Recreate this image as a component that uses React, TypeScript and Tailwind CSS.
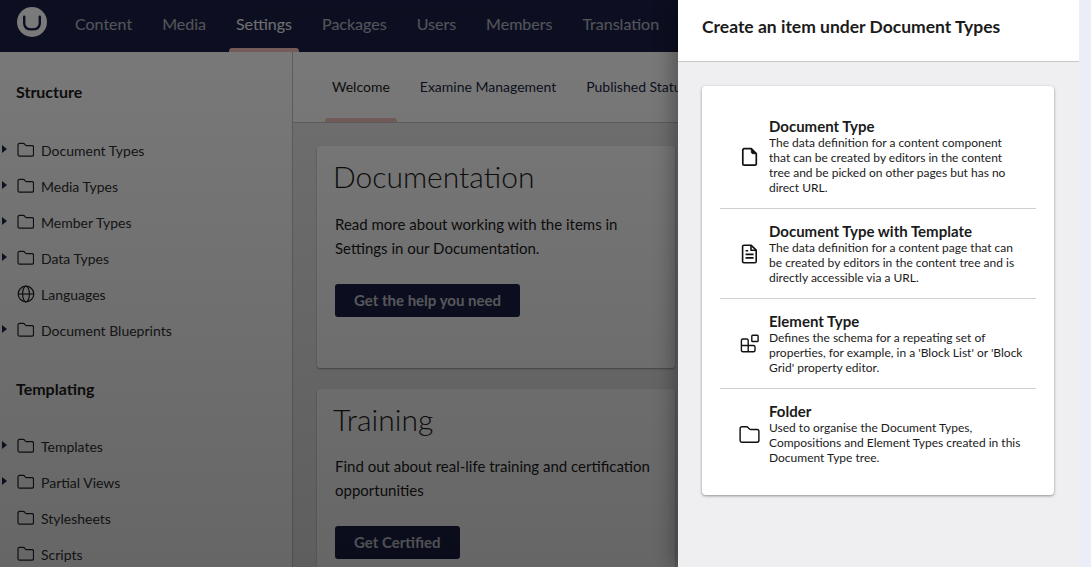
import React from 'react';

const navItems = ['Content', 'Media', 'Settings', 'Packages', 'Users', 'Members', 'Translation'];

const FolderIcon = ({ className = 'w-[17.5px] h-[15.5px]' }: { className?: string }) => (
  <svg viewBox="0 0 19 17" fill="none" stroke="currentColor" strokeWidth="1.3" strokeLinejoin="round" className={className}>
    <path d="M1 3.2C1 2.2 1.7 1.5 2.6 1.5h4.2c.6 0 1 .3 1.4.7l1 1.2c.3.3.6.5 1 .5h6.2c.9 0 1.6.7 1.6 1.6v8.3c0 .9-.7 1.7-1.6 1.7H2.6c-.9 0-1.6-.8-1.6-1.7V3.2z" />
  </svg>
);

const GlobeIcon = () => (
  <svg viewBox="0 0 18 18" fill="none" stroke="currentColor" strokeWidth="1.2" className="w-[18px] h-[18px]">
    <circle cx="9" cy="9" r="7.8" />
    <ellipse cx="9" cy="9" rx="3.4" ry="7.8" />
    <path d="M1.2 9h15.6" />
  </svg>
);

const TreeItem = ({ label, arrow = true, globe = false }: { label: string; arrow?: boolean; globe?: boolean }) => (
  <div className="relative flex h-9 items-center pl-[16.5px] text-[#1b264f]">
    {arrow && <span className="absolute left-[2px] top-[13px] h-0 w-0 border-y-[4.5px] border-l-[5px] border-y-transparent border-l-[#1b264f]" />}
    <span className="flex w-[24.5px] shrink-0 text-[#222]">{globe ? <GlobeIcon /> : <FolderIcon />}</span>
    <span className="text-[14px] text-[#303030]">{label}</span>
  </div>
);

const InfoCard = ({ title, lines, button, bodyGap }: { title: string; lines: string[]; button: string; bodyGap: string }) => (
  <div className="w-[358px] shrink-0 rounded-[3px] bg-white pb-[51px] pl-[18px] pt-[12px] shadow-[0_1px_2px_rgba(0,0,0,0.35)]">
    <h2 className="-ml-[2px] h-9 text-[30px] leading-9 font-light text-[#1b1b1b]">{title}</h2>
    <p className={`${bodyGap} text-[15px] leading-6 text-[#1b1b1b]`}>
      {lines[0]}
      <br />
      {lines[1]}
    </p>
    <button className="mt-[24px] flex h-[33px] items-center rounded-[3px] bg-[#1a1f45] px-[19px] text-[15px] font-bold text-white/75">{button}</button>
  </div>
);

const DocIcon = () => (
  <svg viewBox="0 0 20 20" fill="none" stroke="currentColor" strokeWidth="1.7" strokeLinejoin="round" className="h-5 w-5">
    <path d="M2.8 3c0-.8.6-1.3 1.3-1.3h7.2l5 5v10.2c0 .8-.6 1.3-1.3 1.3H4.1c-.7 0-1.3-.5-1.3-1.3V3z" />
    <path d="M11.3 1.7v3.2c0 1 .7 1.8 1.8 1.8h3.2" fill="currentColor" strokeWidth="0.9" />
  </svg>
);

const DocLinesIcon = () => (
  <svg viewBox="0 0 20 20" fill="none" stroke="currentColor" strokeWidth="1.6" strokeLinejoin="round" className="h-5 w-5">
    <path d="M2.6 2.6c0-.8.6-1.3 1.3-1.3h7.3l5 4.8v11.3c0 .8-.6 1.3-1.3 1.3H3.9c-.7 0-1.3-.5-1.3-1.3V2.6z" />
    <path d="M11 1.5v4.7h5" />
    <path d="M5.6 6.8h2.6M5.6 10.4h8M5.6 13.9h8" />
  </svg>
);

const ElementIcon = () => (
  <svg viewBox="0 0 20 20" fill="none" stroke="currentColor" strokeWidth="1.4" strokeLinejoin="round" className="h-5 w-5">
    <path d="M1.4 6.5c0-.9.6-1.5 1.5-1.5h3.8c.9 0 1.5.6 1.5 1.5v5h5.3c.9 0 1.5.6 1.5 1.5v3.2c0 .9-.6 1.5-1.5 1.5H2.9c-.9 0-1.5-.6-1.5-1.5V6.5z" />
    <path d="M8.2 11.5v6.2M1.4 11.5h6.8" />
    <rect x="11.8" y="1.2" width="6.3" height="6.3" rx="0.8" />
  </svg>
);

const createItems = [
  { title: 'Document Type', icon: <DocIcon />, text: 'The data definition for a content component that can be created by editors in the content tree and be picked on other pages but has no direct URL.' },
  { title: 'Document Type with Template', icon: <DocLinesIcon />, text: 'The data definition for a content page that can be created by editors in the content tree and is directly accessible via a URL.' },
  { title: 'Element Type', icon: <ElementIcon />, text: "Defines the schema for a repeating set of properties, for example, in a 'Block List' or 'Block Grid' property editor." },
  { title: 'Folder', icon: <FolderIcon className="-ml-px h-[19px] w-[21px] shrink-0" />, text: 'Used to organise the Document Types, Compositions and Element Types created in this Document Type tree.' },
];

export default function App() {
  return (
    <div className="relative flex h-screen w-full flex-col overflow-hidden bg-white font-['Lato',sans-serif]">
      <header className="flex h-[52px] shrink-0 bg-[#1a1f45]">
        <div className="ml-[17px] mr-[13px] mt-[7px] h-[30px] w-[30px] shrink-0 rounded-full bg-white">
          <svg viewBox="0 0 30 30" fill="none" stroke="#1a1f45" strokeWidth="2.4" strokeLinecap="round" className="h-[30px] w-[30px]">
            <path d="M7.2 9.8v6.4c0 4.6 2.6 6.2 7.8 6.2s7.8-1.6 7.8-6.2V9.8" />
          </svg>
        </div>
        {navItems.map((item) => (
          <div key={item} className={`relative flex items-center px-[15px] pb-1 text-[16px] ${item === 'Settings' ? 'text-white/90' : 'text-white/65'}`}>
            {item}
            {item === 'Settings' && <span className="absolute inset-x-[8px] bottom-0 h-1 rounded-t-[3px] bg-[#f5c1bc]" />}
          </div>
        ))}
      </header>

      <div className="flex min-h-0 flex-1">
        <aside className="w-[293px] shrink-0 border-r border-[#c4c4c4] bg-white">
          <h3 className="mt-[30px] h-5 pl-4 text-[16px] leading-5 font-bold text-[#1b1b1b]">Structure</h3>
          <div className="mt-[30px]">
            <TreeItem label="Document Types" />
            <TreeItem label="Media Types" />
            <TreeItem label="Member Types" />
            <TreeItem label="Data Types" />
            <TreeItem label="Languages" arrow={false} globe />
            <TreeItem label="Document Blueprints" />
          </div>
          <h3 className="mt-[31px] h-5 pl-4 text-[16px] leading-5 font-bold text-[#1b1b1b]">Templating</h3>
          <div className="mt-[29px]">
            <TreeItem label="Templates" />
            <TreeItem label="Partial Views" />
            <TreeItem label="Stylesheets" arrow={false} />
            <TreeItem label="Scripts" arrow={false} />
          </div>
        </aside>

        <main className="flex min-w-0 flex-1 flex-col bg-[#ebebeb]">
          <div className="flex h-[71px] shrink-0 border-b border-[#c4c4c4] bg-white pl-[24px]">
            <div className="relative flex items-center px-[15px] pb-[1px] text-[14px] text-[#1b1b1b]">
              Welcome
              <span className="absolute inset-x-[8px] bottom-0 h-1 rounded-t-[3px] bg-[#f5c1bc]" />
            </div>
            <div className="flex items-center px-[15px] pb-[1px] text-[14px] text-[#1a1f45]">Examine Management</div>
            <div className="flex items-center whitespace-nowrap px-[15px] pb-[1px] text-[14px] text-[#1a1f45]">Published Status</div>
          </div>
          <div className="flex flex-col gap-[21px] pl-[24px] pt-[23px]">
            <InfoCard title="Documentation" lines={['Read more about working with the items in', 'Settings in our Documentation.']} button="Get the help you need" bodyGap="mt-[18px]" />
            <InfoCard title="Training" lines={['Find out about real-life training and certification', 'opportunities']} button="Get Certified" bodyGap="mt-[17px]" />
          </div>
        </main>
      </div>

      <div className="absolute inset-0 bg-linear-to-b from-black/[.52] to-black/[.6]" />

      <div className="absolute inset-y-0 right-0 flex">
        <section className="flex w-[401px] flex-col bg-[#efeff1] shadow-[-6px_0_18px_rgba(0,0,0,0.3)]">
          <div className="flex h-[62px] shrink-0 items-center border-b border-[#c9c9c9] bg-white pb-[6px] pl-6 text-[17.5px] font-bold text-[#1b1b1b]">
            Create an item under Document Types
          </div>
          <div className="ml-6 mr-[25px] mt-6 rounded-[4px] bg-white px-[18px] pb-[17px] pt-[18px] shadow-[0_1px_3px_rgba(0,0,0,0.4)]">
            {createItems.map((item, i) => (
              <div key={item.title} className={`flex items-center pb-[13px] pl-[20px] pt-[14px] ${i < createItems.length - 1 ? 'border-b border-[#d0d0d0]' : ''}`}>
                <span className="mr-[9px] flex w-5 shrink-0 text-[#111]">{item.icon}</span>
                <div className="w-[255px] text-[#1b1b1b]">
                  <div className="text-[15px] leading-[17px] font-bold">{item.title}</div>
                  <p className="text-[12px] leading-[15px]">{item.text}</p>
                </div>
              </div>
            ))}
          </div>
        </section>
        <div className="w-3 bg-[#e9eef8]" />
      </div>
    </div>
  );
}
